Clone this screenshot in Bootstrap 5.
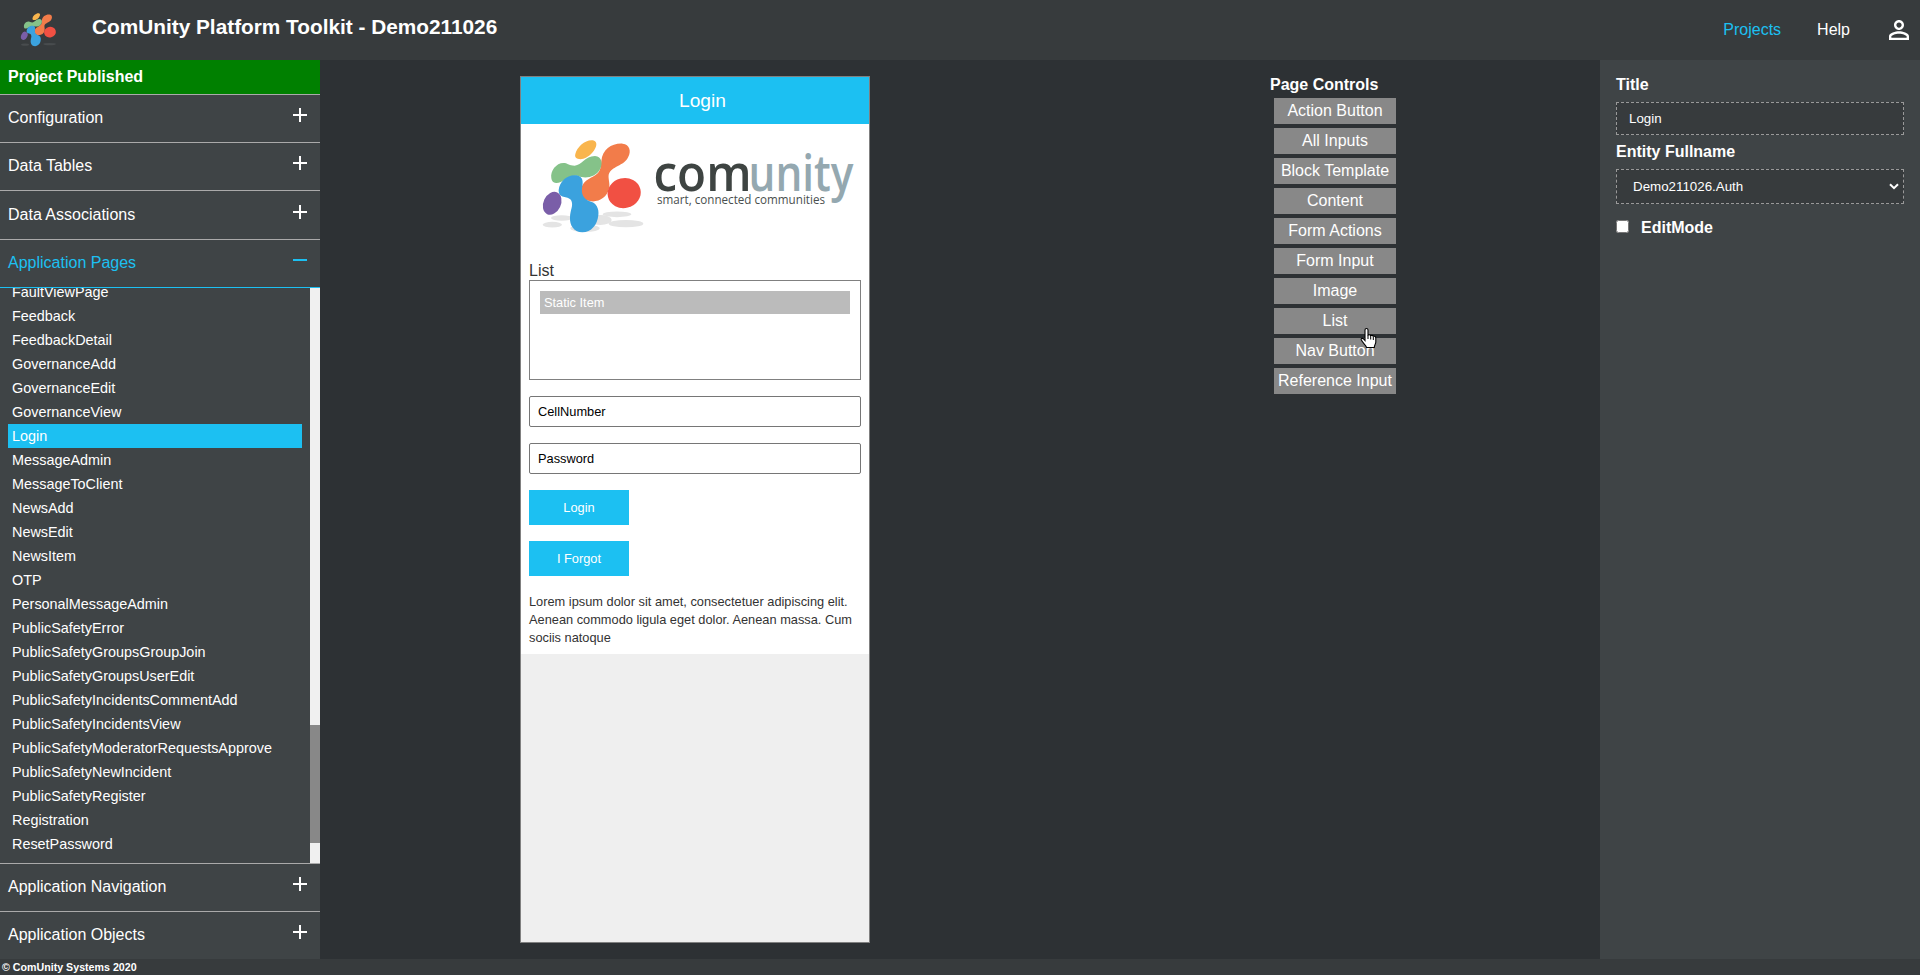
<!DOCTYPE html>
<html lang="en">
<head>
<meta charset="utf-8">
<title>ComUnity Platform Toolkit</title>
<link href="https://cdn.jsdelivr.net/npm/bootstrap@5.3.0/dist/css/bootstrap.min.css" rel="stylesheet">
<script src="https://cdn.jsdelivr.net/npm/bootstrap@5.3.0/dist/js/bootstrap.bundle.min.js" defer></script>
<style>
body{font-family:"Liberation Sans",Arial,sans-serif;font-size:16px;line-height:18px;background:#2d3134;color:#fff;height:100vh;overflow:hidden}
.topbar{height:60px;background:#373b3d;padding:0 11px 0 18px}
.brand-title{font-size:20.8px;font-weight:700;line-height:24px;margin:-7px 0 0 33px}
.cy{color:#1cc0f2}
.topbar a{text-decoration:none;color:#fff}
.topbar a.cy{color:#1cc0f2}
.side{width:320px;background:#3f4446}
.published{height:34px;background:#008000;padding:8px 8px;font-weight:700}
.sec{height:48px;border-top:1px solid #aaa;padding:14px 13px 0 8px}
.sec.tall{height:49px;padding-top:15px}
.sec svg{margin-top:-1px}
.pages{height:576px;border-top:1px solid #1cc0f2;overflow:hidden}
.page-items{font-size:14.4px;line-height:24px;padding:0 8px;margin-top:-8px;margin-bottom:0;width:310px}
.page-items li{padding:0 4px;height:24px}
.page-items li.on{background:#1cc0f2}
.track{width:10px;background:#f0f0f0;padding-top:437px}
.thumb{height:118px;background:#888}
.foot{height:16px;background:#373b3d;font-size:10.67px;font-weight:700;line-height:16px;padding-left:2px}
.phone{width:350px;height:867px;border:1px solid #808080;background:#efefef;margin:16px 0 0 200px;color:#333;font-size:12.8px}
.phone-head{height:47px;background:#1cc0f2;color:#fff;font-size:19.2px;line-height:48px;padding-left:15px}
.phone-body{height:530px;background:#fff;padding:0 8px}
.logo-box{height:137px;margin:0 -8px}
.list-label{font-size:16px;line-height:20px;height:19px}
.list-box{height:100px;border:1px solid #808080;padding:10px;margin-bottom:16px}
.static-item{height:23px;line-height:23px;background:#bbb;color:#fff;padding-left:4px}
.fld{display:block;width:100%;height:31px;border:1px solid #767676;border-radius:2px;padding:0 8px;color:#000;margin-bottom:16px;font-size:12.8px}
.act{display:block;width:100px;height:35px;border:0;border-radius:0;background:#1cc0f2;color:#fff;font-size:12.8px;padding:0;margin-bottom:16px}
.controls{margin:16px 0 0 400px;width:130px}
.ctl{width:122px;height:26px;line-height:25px;background:#888;margin:0 0 4px 4px;text-align:center;white-space:nowrap}
.props{width:320px;background:#3f4446;padding:16px 16px}
.props b{display:block;height:26px}
.prop-in{display:block;width:100%;background:#373b3d;border:1px dashed #999;color:#fff;font-size:13.33px}
.cursor-hand{position:absolute;left:1360px;top:327px}
</style>
</head>
<body class="d-flex flex-column">
<svg width="0" height="0" class="position-absolute">
<defs>
<symbol id="plus" viewBox="0 0 14 14"><path d="M7 0v14M0 7h14" stroke="#fff" stroke-width="2"/></symbol>
<g id="blobs">
<path d="M121 72C126 50 152 28 174 31C190 35 185 53 173 67C156 86 140 90 128 86C121 84 119 79 121 72Z" fill="#f9b54d"/>
<path d="M199 93C202 58 231 39 263 41C284 43 289 64 280 80C267 109 229 107 221 134C219 147 226 161 222 175C217 201 194 216 169 214C145 213 134 194 139 175C146 148 172 145 188 130C198 119 197 108 199 93Z" fill="#f27c4a"/>
<path d="M49 145C45 121 66 96 89 99C101 101 101 107 119 107C141 105 149 79 180 78C201 80 204 101 195 118C182 143 149 147 130 138C100 132 84 160 63 159C54 158 50 153 49 145Z" fill="#85c289"/>
<path d="M71 180C74 153 98 132 125 136C145 140 145 156 141 175C139 193 145 206 164 214C184 218 193 237 190 256C187 285 169 307 142 307C115 306 104 284 105 263C105 240 117 226 108 210C98 197 70 207 71 180Z" fill="#3ba2de"/>
<ellipse cx="267.500" cy="189" rx="50" ry="45" transform="rotate(-14 268 189)" fill="#f15043"/>
<ellipse cx="51.500" cy="220" rx="26" ry="36" transform="rotate(25 52 220)" fill="#7a5ea8"/>
</g>
</defs>
</svg>

<header class="topbar d-flex align-items-center flex-shrink-0">
  <svg width="41" height="40" viewBox="0 0 118 116" style="margin-top:-1px">
    <g transform="scale(.335)"><ellipse cx="60" cy="300" rx="34" ry="9" fill="#484c4e"/><ellipse cx="272" cy="295" rx="55" ry="10" fill="#484c4e"/></g>
    <g transform="translate(0 -1) scale(.345)"><use href="#blobs"/></g>
  </svg>
  <div class="brand-title">ComUnity Platform Toolkit - Demo211026</div>
  <nav class="ms-auto d-flex align-items-center">
    <a href="#" class="cy">Projects</a>
    <a href="#" style="margin-left:36px">Help</a>
    <svg width="20" height="20" viewBox="4 4 16 16" fill="#fff" style="margin-left:39px"><path d="M12 5.9c1.16 0 2.1.94 2.1 2.1s-.94 2.1-2.1 2.1S9.900 9.160 9.900 8s.94-2.100 2.100-2.100m0 9c2.970 0 6.100 1.460 6.100 2.100v1.100H5.900V17c0-.64 3.130-2.100 6.100-2.100M12 4C9.790 4 8 5.790 8 8s1.790 4 4 4 4-1.790 4-4-1.790-4-4-4zm0 9c-2.670 0-8 1.340-8 4v3h16v-3c0-2.660-5.330-4-8-4z"/></svg>
  </nav>
</header>

<main class="d-flex flex-grow-1">
  <aside class="side flex-shrink-0">
    <div class="published">Project Published</div>
    <div class="sec d-flex justify-content-between"><span>Configuration</span><svg width="14" height="14"><use href="#plus"/></svg></div>
    <div class="sec d-flex justify-content-between"><span>Data Tables</span><svg width="14" height="14"><use href="#plus"/></svg></div>
    <div class="sec tall d-flex justify-content-between"><span>Data Associations</span><svg width="14" height="14"><use href="#plus"/></svg></div>
    <div class="sec d-flex justify-content-between cy"><span>Application Pages</span><svg width="14" height="14"><path d="M0 7h14" stroke="#1cc0f2" stroke-width="2"/></svg></div>
    <div class="pages d-flex">
      <ul class="page-items list-unstyled">
        <li>FaultViewPage</li><li>Feedback</li><li>FeedbackDetail</li><li>GovernanceAdd</li><li>GovernanceEdit</li><li>GovernanceView</li><li class="on">Login</li><li>MessageAdmin</li><li>MessageToClient</li><li>NewsAdd</li><li>NewsEdit</li><li>NewsItem</li><li>OTP</li><li>PersonalMessageAdmin</li><li>PublicSafetyError</li><li>PublicSafetyGroupsGroupJoin</li><li>PublicSafetyGroupsUserEdit</li><li>PublicSafetyIncidentsCommentAdd</li><li>PublicSafetyIncidentsView</li><li>PublicSafetyModeratorRequestsApprove</li><li>PublicSafetyNewIncident</li><li>PublicSafetyRegister</li><li>Registration</li><li>ResetPassword</li>
      </ul>
      <div class="track"><div class="thumb"></div></div>
    </div>
    <div class="sec d-flex justify-content-between"><span>Application Navigation</span><svg width="14" height="14"><use href="#plus"/></svg></div>
    <div class="sec d-flex justify-content-between"><span>Application Objects</span><svg width="14" height="14"><use href="#plus"/></svg></div>
  </aside>

  <section class="phone flex-shrink-0">
    <div class="phone-head text-center">Login</div>
    <div class="phone-body">
      <div class="logo-box">
        <svg class="d-block" width="348" height="136" viewBox="521 124 348 136">
          <g transform="translate(535 130) scale(.33333)">
            <g fill="#e4e4e4"><ellipse cx="52" cy="284" rx="29" ry="8.500"/><ellipse cx="80" cy="264" rx="32" ry="8"/><ellipse cx="150" cy="295" rx="44" ry="11"/><ellipse cx="196" cy="270" rx="34" ry="15"/><ellipse cx="246" cy="253" rx="43" ry="8.500"/><ellipse cx="273" cy="281" rx="52" ry="11"/></g>
            <use href="#blobs"/>
          </g>
          <g font-family="Open Sans, sans-serif">
            <text x="653.500" y="191" font-size="51" font-weight="600" fill="#3e4442" textLength="98" lengthAdjust="spacingAndGlyphs">com</text>
            <text x="748.500" y="191" font-size="51" font-weight="600" fill="#94a8b0" textLength="105" lengthAdjust="spacingAndGlyphs">unity</text>
            <text x="657" y="204.300" font-size="12.500" fill="#4a4f4e" textLength="168" lengthAdjust="spacingAndGlyphs">smart, connected communities</text>
          </g>
        </svg>
      </div>
      <div class="list-label">List</div>
      <div class="list-box"><div class="static-item">Static Item</div></div>
      <input class="fld" value="CellNumber">
      <input class="fld" value="Password">
      <button class="act">Login</button>
      <button class="act">I Forgot</button>
      <p class="mb-0" style="padding-top:1px">Lorem ipsum dolor sit amet, consectetuer adipiscing elit. Aenean commodo ligula eget dolor. Aenean massa. Cum sociis natoque</p>
    </div>
  </section>

  <section class="controls flex-shrink-0">
    <div class="fw-bold" style="height:22px">Page Controls</div>
    <div class="ctl">Action Button</div><div class="ctl">All Inputs</div><div class="ctl">Block Template</div><div class="ctl">Content</div><div class="ctl">Form Actions</div><div class="ctl">Form Input</div><div class="ctl">Image</div><div class="ctl">List</div><div class="ctl">Nav Button</div><div class="ctl">Reference Input</div>
  </section>

  <aside class="props ms-auto flex-shrink-0">
    <b>Title</b>
    <input class="prop-in" style="height:33px;padding:0 12px" value="Login">
    <b style="margin-top:8px">Entity Fullname</b>
    <div class="prop-in d-flex align-items-center justify-content-between" style="height:35px;padding:0 4px 0 16px"><span>Demo211026.Auth</span><svg width="10" height="7" viewBox="0 0 10 7"><path d="M1 1.200l4 4 4-4" fill="none" stroke="#fff" stroke-width="2"/></svg></div>
    <div class="d-flex" style="margin-top:15px"><input type="checkbox" class="m-0" style="width:13px;height:13px;margin-top:1px!important"><b style="height:18px;margin-left:12px">EditMode</b></div>
  </aside>
</main>
<footer class="foot flex-shrink-0">© ComUnity Systems 2020</footer>

<svg class="cursor-hand" width="18" height="23" viewBox="0 0 18 23"><path d="M6.500 1.500c1 0 1.500.7 1.500 1.500v5.500c0-1 2.500-1 2.700.5 0-1 2.500-.8 2.600.7.2-.9 2.500-.6 2.500 1.200v4c0 2-1.500 3.300-1.500 5.600H6.500c0-2-4.500-5-5.300-7.800-.3-1.500 1.600-1.800 2.600-.5L5 13.500V3c0-.8.5-1.500 1.500-1.500z" fill="#fff" stroke="#000" stroke-width="1.100"/><path d="M8 8v4M10.700 9v3.500M13.300 10v3" stroke="#000"/></svg>
</body>
</html>
